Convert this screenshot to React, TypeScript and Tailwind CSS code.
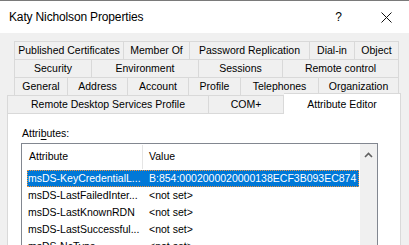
import React from 'react';

const font = "font-['Liberation_Sans',Arial,sans-serif]";

interface TabProps {
  label: string;
  width: string;
  first?: boolean;
}

const Tab = ({ label, width, first }: TabProps) => (
  <div
    className={`${width} h-full flex items-center justify-center border-t border-r border-[#d9d9d9] bg-[#f0f0f0] ${
      first ? 'border-l' : ''
    }`}
  >
    {label}
  </div>
);

const rows = [
  { name: 'msDS-KeyCredentialL...', value: 'B:854:0002000020000138ECF3B093EC874', selected: true },
  { name: 'msDS-LastFailedInter...', value: '<not set>' },
  { name: 'msDS-LastKnownRDN', value: '<not set>' },
  { name: 'msDS-LastSuccessful...', value: '<not set>' },
  { name: 'msDS-NcType', value: '<not set>' },
];

export default function App() {
  return (
    <div className={`w-[409px] h-[245px] overflow-hidden bg-[#f0f0f0] text-black ${font} flex flex-col`}>
      {/* title bar */}
      <div className="h-[33px] shrink-0 bg-white border-t border-[#7a7a7a] flex items-center">
        <span className="ml-[9px] text-[12px] tracking-[-0.15px]">Katy Nicholson Properties</span>
        <span className="ml-auto text-[12px] mr-[39px]">?</span>
        <svg width="11" height="11" viewBox="0 0 11 11" className="mr-[17px]">
          <path d="M0.5 0.5 L10.5 10.5 M10.5 0.5 L0.5 10.5" stroke="#111" strokeWidth="1" fill="none" />
        </svg>
      </div>

      {/* tabs */}
      <div className="pt-[8px] text-[10.5px] leading-none">
        <div className="flex h-[18px] ml-[14px]">
          <Tab label="Published Certificates" width="w-[110px]" first />
          <Tab label="Member Of" width="w-[66px]" />
          <Tab label="Password Replication" width="w-[120px]" />
          <Tab label="Dial-in" width="w-[45px]" />
          <Tab label="Object" width="w-[44px]" />
        </div>
        <div className="flex h-[18px] ml-[14px]">
          <Tab label="Security" width="w-[78px]" first />
          <Tab label="Environment" width="w-[107px]" />
          <Tab label="Sessions" width="w-[84px]" />
          <Tab label="Remote control" width="w-[116px]" />
        </div>
        <div className="flex h-[18px] ml-[14px]">
          <Tab label="General" width="w-[54px]" first />
          <Tab label="Address" width="w-[60px]" />
          <Tab label="Account" width="w-[61px]" />
          <Tab label="Profile" width="w-[52px]" />
          <Tab label="Telephones" width="w-[78px]" />
          <Tab label="Organization" width="w-[80px]" />
        </div>
        <div className="flex items-end h-[18px] ml-[7px]">
          <Tab label="Remote Desktop Services Profile" width="w-[202px]" first />
          <Tab label="COM+" width="w-[75px]" />
          <div className="relative z-10 w-[117px] h-[21px] -mb-px flex items-start justify-center pt-[5px] bg-white border-t border-r border-[#d9d9d9]">
            Attribute Editor
          </div>
        </div>
      </div>

      {/* pane */}
      <div className="ml-[7px] w-[394px] flex-1 bg-white border border-[#d9d9d9] pl-[13px] text-[10.5px]">
        <div className="pl-[1px] pt-[13px] leading-[13px]">
          Attri<span className="underline underline-offset-[2px]">b</span>utes:
        </div>
        <div className="mt-[3px] w-[357px] h-[120px] border border-[#828790] flex">
          <div className="flex-1 flex flex-col">
            <div className="h-[26px] shrink-0 flex items-stretch">
              <div className="w-[121px] pl-[7px] flex items-center border-r border-[#e5e5e5] my-px">Attribute</div>
              <div className="pl-[6px] flex items-center">Value</div>
            </div>
            {rows.map(r => (
              <div
                key={r.name}
                className={`ml-[5px] w-[332px] h-[17px] shrink-0 flex items-center whitespace-nowrap overflow-hidden border ${
                  r.selected ? 'bg-[#0078d7] text-white border-dotted border-[#f2923a]' : 'border-transparent'
                }`}
              >
                <div className="w-[115px] shrink-0">{r.name}</div>
                <div className="pl-[6px]">{r.value}</div>
              </div>
            ))}
          </div>
          <div className="w-[17px] bg-[#f0f0f0] flex justify-center pt-[8px]">
            <svg width="9" height="6" viewBox="0 0 9 6">
              <path d="M1 5 L4.5 1.5 L8 5" stroke="#606060" strokeWidth="1.6" fill="none" />
            </svg>
          </div>
        </div>
      </div>
    </div>
  );
}
